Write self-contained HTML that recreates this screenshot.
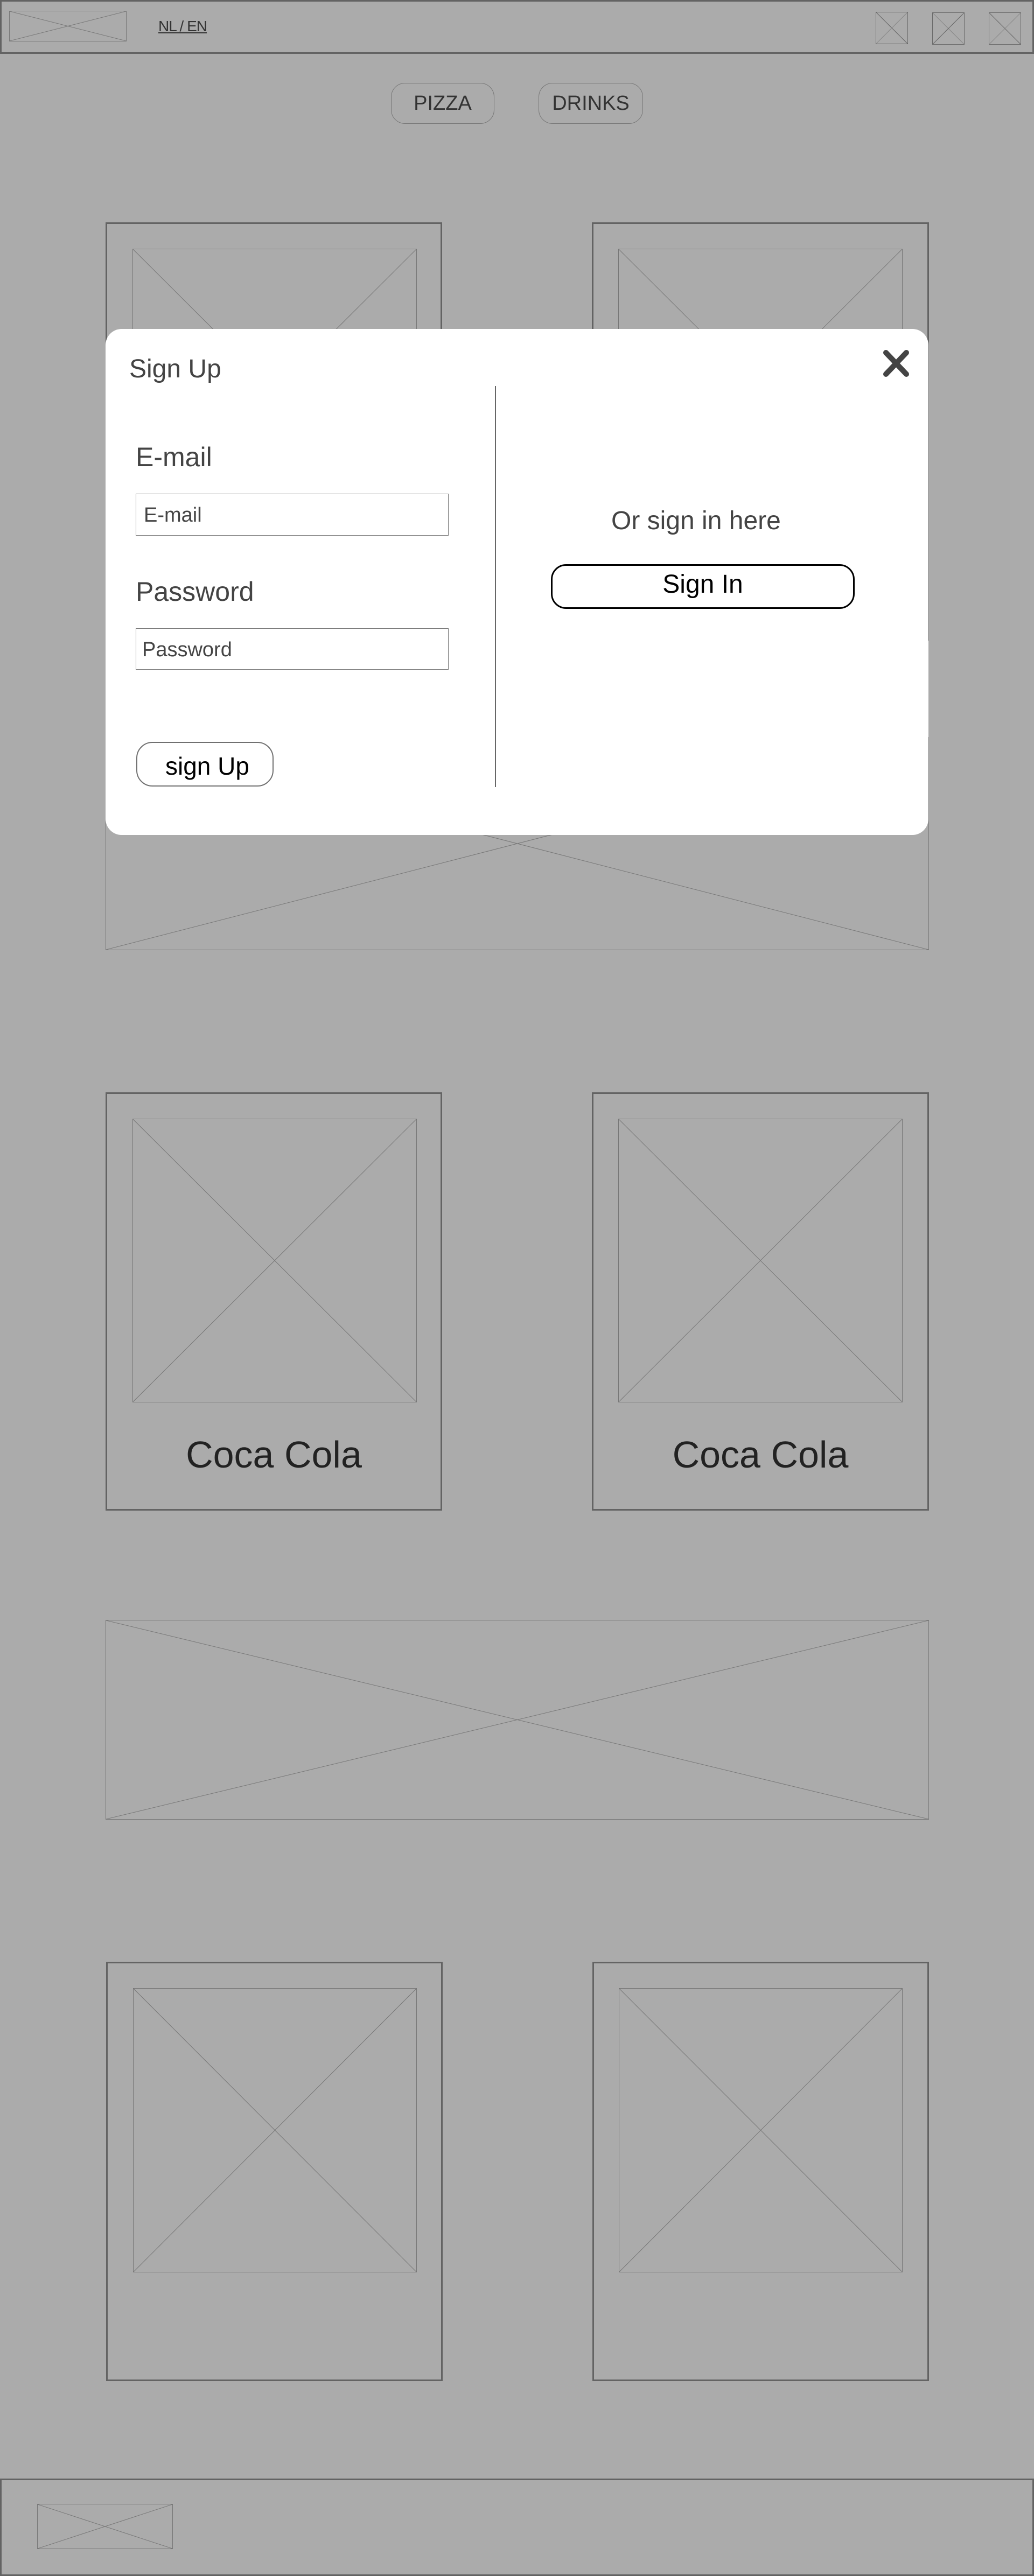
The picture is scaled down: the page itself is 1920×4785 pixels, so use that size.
<!DOCTYPE html>
<html><head><meta charset="utf-8">
<style>
*{margin:0;padding:0;box-sizing:border-box}
html,body{width:1920px;height:4785px;background:#ababab;overflow:hidden;font-family:"Liberation Sans",sans-serif;position:relative}
.a{position:absolute}
.ph{position:absolute;border:1.5px solid #777}
.ph svg{position:absolute;left:0;top:0;width:100%;height:100%}
.card{position:absolute;border:3px solid #636363}
.btn{position:absolute;border:1.5px solid #777;border-radius:26px;color:#333;font-size:38px;display:flex;align-items:center;justify-content:center}
.cc{position:absolute;width:100%;text-align:center;font-size:70px;color:#222;left:0}
</style></head><body>

<!-- header -->
<div class="a" style="left:0;top:0;width:1920px;height:100px;border:3px solid #636363"></div>
<div class="ph" style="left:17px;top:20px;width:218px;height:57px"><svg viewBox="0 0 100 100" preserveAspectRatio="none"><line x1="0" y1="0" x2="100" y2="100" stroke="#777" stroke-width="1" vector-effect="non-scaling-stroke"/><line x1="100" y1="0" x2="0" y2="100" stroke="#777" stroke-width="1" vector-effect="non-scaling-stroke"/></svg></div>
<div class="a" style="left:294px;top:33px;font-size:28px;color:#333;text-decoration:underline;letter-spacing:-1px">NL / EN</div>
<div class="ph" style="left:1626px;top:22px;width:60px;height:60px;border-color:#6a6a6a"><svg viewBox="0 0 100 100" preserveAspectRatio="none"><line x1="0" y1="0" x2="100" y2="100" stroke="#666" stroke-width="1" vector-effect="non-scaling-stroke"/><line x1="100" y1="0" x2="0" y2="100" stroke="#888" stroke-width="1" vector-effect="non-scaling-stroke"/></svg></div>
<div class="ph" style="left:1731px;top:23px;width:60px;height:60px;border-color:#6a6a6a"><svg viewBox="0 0 100 100" preserveAspectRatio="none"><line x1="0" y1="0" x2="100" y2="100" stroke="#888" stroke-width="1" vector-effect="non-scaling-stroke"/><line x1="100" y1="0" x2="0" y2="100" stroke="#666" stroke-width="1" vector-effect="non-scaling-stroke"/></svg></div>
<div class="ph" style="left:1836px;top:23px;width:60px;height:60px;border-color:#6a6a6a"><svg viewBox="0 0 100 100" preserveAspectRatio="none"><line x1="0" y1="0" x2="100" y2="100" stroke="#666" stroke-width="1" vector-effect="non-scaling-stroke"/><line x1="100" y1="0" x2="0" y2="100" stroke="#888" stroke-width="1" vector-effect="non-scaling-stroke"/></svg></div>

<!-- nav -->
<div class="btn" style="left:726px;top:154px;width:192px;height:76px">PIZZA</div>
<div class="btn" style="left:1000px;top:154px;width:194px;height:76px">DRINKS</div>

<!-- row 1 -->
<div class="card" style="left:196px;top:413px;width:625px;height:777px"></div>
<div class="ph" style="left:246px;top:462px;width:528px;height:527px"><svg viewBox="0 0 100 100" preserveAspectRatio="none"><line x1="0" y1="0" x2="100" y2="100" stroke="#777" vector-effect="non-scaling-stroke"/><line x1="100" y1="0" x2="0" y2="100" stroke="#777" vector-effect="non-scaling-stroke"/></svg></div>
<div class="card" style="left:1099px;top:413px;width:626px;height:777px"></div>
<div class="ph" style="left:1148px;top:462px;width:528px;height:527px"><svg viewBox="0 0 100 100" preserveAspectRatio="none"><line x1="0" y1="0" x2="100" y2="100" stroke="#777" vector-effect="non-scaling-stroke"/><line x1="100" y1="0" x2="0" y2="100" stroke="#777" vector-effect="non-scaling-stroke"/></svg></div>
<div class="ph" style="left:196px;top:1369px;width:1529px;height:396px"><svg viewBox="0 0 100 100" preserveAspectRatio="none"><line x1="0" y1="0" x2="100" y2="100" stroke="#777" vector-effect="non-scaling-stroke"/><line x1="100" y1="0" x2="0" y2="100" stroke="#777" vector-effect="non-scaling-stroke"/></svg></div>

<!-- row 2 -->
<div class="card" style="left:196px;top:2029px;width:625px;height:777px"><div class="cc" style="top:630px">Coca Cola</div></div>
<div class="ph" style="left:246px;top:2078px;width:528px;height:527px"><svg viewBox="0 0 100 100" preserveAspectRatio="none"><line x1="0" y1="0" x2="100" y2="100" stroke="#777" vector-effect="non-scaling-stroke"/><line x1="100" y1="0" x2="0" y2="100" stroke="#777" vector-effect="non-scaling-stroke"/></svg></div>
<div class="card" style="left:1099px;top:2029px;width:626px;height:777px"><div class="cc" style="top:630px">Coca Cola</div></div>
<div class="ph" style="left:1148px;top:2078px;width:528px;height:527px"><svg viewBox="0 0 100 100" preserveAspectRatio="none"><line x1="0" y1="0" x2="100" y2="100" stroke="#777" vector-effect="non-scaling-stroke"/><line x1="100" y1="0" x2="0" y2="100" stroke="#777" vector-effect="non-scaling-stroke"/></svg></div>
<div class="ph" style="left:196px;top:3009px;width:1529px;height:371px"><svg viewBox="0 0 100 100" preserveAspectRatio="none"><line x1="0" y1="0" x2="100" y2="100" stroke="#777" vector-effect="non-scaling-stroke"/><line x1="100" y1="0" x2="0" y2="100" stroke="#777" vector-effect="non-scaling-stroke"/></svg></div>

<!-- row 3 -->
<div class="card" style="left:197px;top:3644px;width:625px;height:779px"></div>
<div class="ph" style="left:247px;top:3693px;width:527px;height:528px"><svg viewBox="0 0 100 100" preserveAspectRatio="none"><line x1="0" y1="0" x2="100" y2="100" stroke="#777" vector-effect="non-scaling-stroke"/><line x1="100" y1="0" x2="0" y2="100" stroke="#777" vector-effect="non-scaling-stroke"/></svg></div>
<div class="card" style="left:1100px;top:3644px;width:625px;height:779px"></div>
<div class="ph" style="left:1149px;top:3693px;width:527px;height:528px"><svg viewBox="0 0 100 100" preserveAspectRatio="none"><line x1="0" y1="0" x2="100" y2="100" stroke="#777" vector-effect="non-scaling-stroke"/><line x1="100" y1="0" x2="0" y2="100" stroke="#777" vector-effect="non-scaling-stroke"/></svg></div>

<!-- footer -->
<div class="a" style="left:0;top:4604px;width:1920px;height:181px;border:3px solid #636363"></div>
<div class="ph" style="left:69px;top:4651px;width:252px;height:84px"><svg viewBox="0 0 100 100" preserveAspectRatio="none"><line x1="0" y1="0" x2="100" y2="100" stroke="#777" vector-effect="non-scaling-stroke"/><line x1="100" y1="0" x2="0" y2="100" stroke="#777" vector-effect="non-scaling-stroke"/></svg></div>

<!-- modal -->
<div class="a" style="left:196px;top:611px;width:1528px;height:940px;background:#fff;border-radius:30px"></div>
<div class="a" style="left:240px;top:658px;font-size:48px;color:#444">Sign Up</div>
<svg class="a" style="left:1638px;top:650px" width="52" height="50" viewBox="0 0 52 50"><path d="M7 5 L45 45 M45 5 L7 45" stroke="#444" stroke-width="10" stroke-linecap="round"/></svg>
<div class="a" style="left:919px;top:717px;width:2px;height:745px;background:#666"></div>
<div class="a" style="left:252px;top:820px;font-size:50px;color:#444">E-mail</div>
<div class="a" style="left:252px;top:917px;width:581px;height:78px;border:1.5px solid #777;font-size:38px;color:#444;padding:18px 0 0 14px">E-mail</div>
<div class="a" style="left:252px;top:1070px;font-size:50px;color:#444">Password</div>
<div class="a" style="left:252px;top:1167px;width:581px;height:77px;border:1.5px solid #777;font-size:38px;color:#444;padding:18px 0 0 11px">Password</div>
<div class="a" style="left:253px;top:1378px;width:255px;height:83px;border:2px solid #707070;border-radius:30px;font-size:46px;color:#000;padding:16px 0 0 52px">sign Up</div>
<div class="a" style="left:1135px;top:940px;font-size:48px;color:#444">Or sign in here</div>
<div class="a" style="left:1023px;top:1048px;width:564px;height:83px;border:3px solid #000;border-radius:28px;font-size:48px;color:#000;display:flex;align-items:center;justify-content:center;padding-bottom:8px">Sign In</div>

</body></html>
